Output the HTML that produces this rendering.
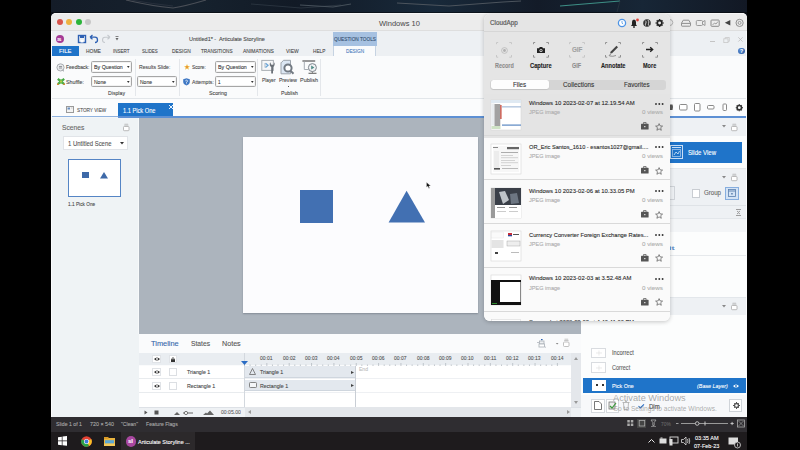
<!DOCTYPE html>
<html><head><meta charset="utf-8">
<style>
*{margin:0;padding:0;box-sizing:border-box}
html,body{width:800px;height:450px;overflow:hidden;background:#000;font-family:"Liberation Sans",sans-serif;}
.a{position:absolute}
.t{position:absolute;white-space:nowrap;line-height:1;-webkit-text-stroke:0.1px currentColor}
svg{overflow:visible}
</style></head><body>
<div class="a" style="left:51.00px;top:0.00px;width:696.00px;height:20.00px;background:linear-gradient(90deg,#141c28 0%,#16222e 20%,#121a26 35%,#18293a 55%,#131b28 70%,#172636 85%,#121824 100%)"></div>
<div class="a" style="left:51.00px;top:11.50px;width:696.00px;height:2.00px;background:rgba(0,0,0,0.45)"></div>
<svg class="a" style="left:51px;top:0px;" width="696" height="16" viewBox="0 0 696 16">
<path d="M75 0 Q100 6 122 8 Q135 6 155 0" stroke="#4a4f57" stroke-width="1.1" fill="none"/>
<path d="M80 0 Q102 4 122 6" stroke="#2c3440" stroke-width="0.8" fill="none"/>
<path d="M200 4 L250 8 L290 5" stroke="#2e3844" stroke-width="0.8" fill="none"/>
<path d="M249 5 L282 7 L300 4" stroke="#46505a" stroke-width="1" fill="none"/>
<path d="M346 3 L398 6 L452 2 L470 1" stroke="#4c545d" stroke-width="1" fill="none"/>
<path d="M509 6 L569 1" stroke="#3e8f86" stroke-width="1.1" fill="none"/>
<path d="M569 1 L566 12" stroke="#2a3540" stroke-width="0.8" fill="none"/>
</svg>
<div class="a" style="left:51.00px;top:13.00px;width:696.00px;height:404.00px;background:#f4f6f8;border-radius:5px 5px 0 0"></div>
<div class="a" style="left:51.00px;top:13.00px;width:696.00px;height:18.00px;background:#ececec;border-radius:5px 5px 0 0;border-bottom:1px solid #dedede;border-top:1px solid #f7f7f7"></div>
<div class="a" style="left:57.00px;top:19.00px;width:6.00px;height:6.00px;border-radius:50%;background:#d9544b"></div>
<div class="a" style="left:66.30px;top:19.00px;width:6.00px;height:6.00px;border-radius:50%;background:#eeb23f"></div>
<div class="a" style="left:76.00px;top:19.00px;width:6.00px;height:6.00px;border-radius:50%;background:#2bb43a"></div>
<div class="a" style="left:85.30px;top:19.00px;width:6.00px;height:6.00px;border-radius:50%;background:#c8c8c8"></div>
<div class="t" style="left:379.00px;top:20.00px;font-size:8.00px;color:#4e4e4e;--w:40.80px;transform:scaleX(0.9362);transform-origin:0 0;-webkit-text-stroke:0.05px #4e4e4e;">Windows 10</div>
<svg class="a" style="left:672px;top:16px;" width="75" height="13" viewBox="0 0 75 13">
<path d="M-2 3.5 Q0.5 3.5 0.8 6.5 Q0.5 9.5 -2 9.5" stroke="#b0b0b0" stroke-width="1" fill="none"/>
<path d="M9.5 7.2 L11.2 4.2 L16.8 4.2 L18.5 7.2 L18.5 9.6 Q18.5 10.2 17.9 10.2 L10.1 10.2 Q9.5 10.2 9.5 9.6Z" stroke="#8e8e8e" stroke-width="1" fill="none"/>
<line x1="9.5" y1="7.4" x2="18.5" y2="7.4" stroke="#8e8e8e" stroke-width="1"/>
<rect x="24.3" y="4.5" width="6.2" height="5" rx="1" stroke="#9a9a9a" stroke-width="1" fill="none"/>
<path d="M30.5 6 L33 4.5 L33 9.5 L30.5 8" stroke="#9a9a9a" stroke-width="1" fill="none"/>
<rect x="39" y="4" width="8.2" height="6.3" rx="0.8" stroke="#8a8a8a" stroke-width="1" fill="none"/>
<path d="M40.5 9 L42.5 7 L44 8 L46 5.5" stroke="#8a8a8a" stroke-width="0.8" fill="none"/>
<path d="M52.8 6.8 L58.3 4 L58.3 9.6Z" fill="#444"/>
<circle cx="67.6" cy="6.9" r="3.6" stroke="#8e8e8e" stroke-width="1" fill="none"/>
<circle cx="67.6" cy="6.9" r="1.5" stroke="#8e8e8e" stroke-width="0.9" fill="none"/>
</svg>
<div class="a" style="left:51.00px;top:31.00px;width:696.00px;height:25.00px;background:#edf0f3"></div>
<div class="a" style="left:55.50px;top:35.00px;width:8.00px;height:8.00px;border-radius:50%;background:#a53b96"></div>
<div class="t" style="left:57.30px;top:37.00px;font-size:5.00px;color:#fff;font-weight:bold;--w:4.50px;transform:scaleX(1.6180);transform-origin:0 0;">s</div>
<svg class="a" style="left:77px;top:34px;" width="50" height="10" viewBox="0 0 50 10">
<rect x="1.5" y="1.5" width="7" height="7" stroke="#2d60b3" stroke-width="1.4" fill="none"/>
<rect x="3" y="1.5" width="4" height="2.5" fill="#2d60b3"/>
<rect x="3.5" y="6" width="3" height="2.5" fill="#fff"/>
<path d="M13 3.2 L15.5 1 M13 3.2 L15.5 5.2 M13 3.2 L18 3.2 Q20.5 3.2 20.5 6 Q20.5 8.5 18 8.5" stroke="#2d60b3" stroke-width="1.3" fill="none"/>
<path d="M33 3.2 L30.5 1 M33 3.2 L30.5 5.2 M33 3.2 L28 3.2 Q25.5 3.2 25.5 6 Q25.5 8.5 28 8.5" stroke="#c5c9ce" stroke-width="1.1" fill="none"/>
<path d="M38.5 4 L41.5 4 L40 6.5Z" fill="#666"/>
<line x1="38.5" y1="2.5" x2="41.5" y2="2.5" stroke="#666" stroke-width="0.8"/>
</svg>
<div class="t" style="left:189.25px;top:36.00px;font-size:6.00px;color:#484848;--w:75.75px;transform:scaleX(0.9158);transform-origin:0 0;">Untitled1* -&nbsp; Articulate Storyline</div>
<div class="a" style="left:333.00px;top:32.00px;width:43.50px;height:14.00px;background:#a6c1e1"></div>
<div class="t" style="left:333.90px;top:37.00px;font-size:5.50px;color:#354f70;--w:42.00px;transform:scaleX(0.8624);transform-origin:0 0;">QUESTION TOOLS</div>
<div class="a" style="left:333.00px;top:46.00px;width:43.00px;height:11.00px;background:#fafbfc;border-left:1px solid #c6d3e2;border-right:1px solid #c6d3e2"></div>
<div class="t" style="left:345.50px;top:49.00px;font-size:5.50px;color:#4a7dbd;--w:18.25px;transform:scaleX(0.8652);transform-origin:0 0;">DESIGN</div>
<div class="a" style="left:51.00px;top:46.00px;width:28.00px;height:10.00px;background:#1f74c9"></div>
<div class="t" style="left:58.50px;top:48.00px;font-size:6.20px;color:#fff;--w:12.50px;transform:scaleX(0.9558);transform-origin:0 0;">FILE</div>
<div class="t" style="left:85.70px;top:49.00px;font-size:5.80px;color:#484848;--w:14.80px;transform:scaleX(0.8503);transform-origin:0 0;">HOME</div>
<div class="t" style="left:113.30px;top:49.00px;font-size:5.80px;color:#484848;--w:16.50px;transform:scaleX(0.7799);transform-origin:0 0;">INSERT</div>
<div class="t" style="left:142.20px;top:49.00px;font-size:5.80px;color:#484848;--w:15.80px;transform:scaleX(0.7661);transform-origin:0 0;">SLIDES</div>
<div class="t" style="left:171.50px;top:49.00px;font-size:5.80px;color:#484848;--w:18.70px;transform:scaleX(0.8410);transform-origin:0 0;">DESIGN</div>
<div class="t" style="left:201.10px;top:49.00px;font-size:5.80px;color:#484848;--w:31.60px;transform:scaleX(0.8106);transform-origin:0 0;">TRANSITIONS</div>
<div class="t" style="left:242.60px;top:49.00px;font-size:5.80px;color:#484848;--w:30.90px;transform:scaleX(0.8666);transform-origin:0 0;">ANIMATIONS</div>
<div class="t" style="left:286.00px;top:49.00px;font-size:5.80px;color:#484848;--w:12.70px;transform:scaleX(0.8565);transform-origin:0 0;">VIEW</div>
<div class="t" style="left:312.70px;top:49.00px;font-size:5.80px;color:#484848;--w:12.30px;transform:scaleX(0.8115);transform-origin:0 0;">HELP</div>
<div class="a" style="left:710.30px;top:40.80px;width:4.90px;height:0.80px;background:#c4c4c4"></div>
<svg class="a" style="left:723px;top:36.5px;" width="7" height="6" viewBox="0 0 7 6"><rect x="0.8" y="1.8" width="4.2" height="3.8" stroke="#c8c8c8" stroke-width="0.8" fill="none"/><path d="M2.2 1.8 L2.2 0.5 L6.3 0.5 L6.3 4.3 L5 4.3" stroke="#c8c8c8" stroke-width="0.8" fill="none"/></svg>
<svg class="a" style="left:737.5px;top:37.3px;" width="5" height="5" viewBox="0 0 5 5"><path d="M0.3 0.3 L4.6 4.6 M4.6 0.3 L0.3 4.6" stroke="#bdbdbd" stroke-width="0.8"/></svg>
<div class="a" style="left:738.00px;top:47.60px;width:6.60px;height:6.60px;border-radius:50%;background:radial-gradient(circle at 35% 35%,#5c8fd6,#25579f)"></div>
<div class="t" style="left:739.60px;top:49.00px;font-size:5.50px;color:#fff;font-weight:bold;--w:3.20px;transform:scaleX(0.9481);transform-origin:0 0;">?</div>
<div class="a" style="left:51.00px;top:56.00px;width:696.00px;height:43.00px;background:#fafbfc;border-bottom:1px solid #e2e6ea"></div>
<svg class="a" style="left:56px;top:62.5px;" width="9" height="9" viewBox="0 0 9 9"><circle cx="4.5" cy="4.4" r="3.6" stroke="#a3a7ab" stroke-width="0.9" fill="#e8eaec"/><path d="M3 3.5 L6 3.5 M3 5 L6 5" stroke="#7d8288" stroke-width="0.8"/><path d="M6.5 7 L8 8.3" stroke="#8a8f94" stroke-width="0.9"/></svg>
<div class="t" style="left:65.50px;top:64.00px;font-size:6.00px;color:#484848;--w:23.50px;transform:scaleX(0.8384);transform-origin:0 0;">Feedback:</div>
<div class="a" style="left:91.40px;top:61.40px;width:40.20px;height:11.20px;background:#fff;border:1px solid #a6a6a6;border-radius:1.5px;box-shadow:inset 0 0 0 0.5px #e6e6e6"></div>
<div class="t" style="left:93.60px;top:64.00px;font-size:6.00px;color:#333;--w:28.80px;transform:scaleX(0.8811);transform-origin:0 0;">By Question</div>
<svg class="a" style="left:126.8px;top:66.4px;" width="3" height="2" viewBox="0 0 3 2"><path d="M0 0 L2.6 0 L1.3 2Z" fill="#333"/></svg>
<svg class="a" style="left:56.5px;top:78px;" width="8" height="7" viewBox="0 0 8 7"><path d="M0.8 0.8 L7.2 6.2 M7.2 0.8 L0.8 6.2" stroke="#46a844" stroke-width="2.2"/><rect x="2.5" y="1.5" width="3" height="4" fill="#5cb84a"/><rect x="3.4" y="2.6" width="1.2" height="1.8" fill="#f2d23c"/><rect x="0" y="5.6" width="1.6" height="1.4" fill="#e5822e"/><rect x="6.4" y="5.6" width="1.6" height="1.4" fill="#e5822e"/></svg>
<div class="t" style="left:66.00px;top:79.00px;font-size:6.00px;color:#484848;--w:18.00px;transform:scaleX(0.8889);transform-origin:0 0;">Shuffle:</div>
<div class="a" style="left:91.40px;top:76.00px;width:40.20px;height:11.30px;background:#fff;border:1px solid #a6a6a6;border-radius:1.5px;box-shadow:inset 0 0 0 0.5px #e6e6e6"></div>
<div class="t" style="left:93.60px;top:79.00px;font-size:6.00px;color:#333;--w:12.00px;transform:scaleX(0.8366);transform-origin:0 0;">None</div>
<svg class="a" style="left:126.8px;top:81.05000000000001px;" width="3" height="2" viewBox="0 0 3 2"><path d="M0 0 L2.6 0 L1.3 2Z" fill="#333"/></svg>
<div class="t" style="left:108.00px;top:90.00px;font-size:6.00px;color:#484848;--w:17.00px;transform:scaleX(0.8635);transform-origin:0 0;">Display</div>
<div class="a" style="left:134.50px;top:59.00px;width:1.00px;height:37.00px;background:#e4e7eb"></div>
<div class="t" style="left:138.50px;top:64.00px;font-size:6.00px;color:#484848;--w:31.30px;transform:scaleX(0.8532);transform-origin:0 0;">Results Slide:</div>
<div class="a" style="left:137.30px;top:76.20px;width:39.50px;height:11.10px;background:#fff;border:1px solid #a6a6a6;border-radius:1.5px;box-shadow:inset 0 0 0 0.5px #e6e6e6"></div>
<div class="t" style="left:139.50px;top:79.00px;font-size:6.00px;color:#333;--w:12.00px;transform:scaleX(0.8366);transform-origin:0 0;">None</div>
<svg class="a" style="left:172.0px;top:81.15px;" width="3" height="2" viewBox="0 0 3 2"><path d="M0 0 L2.6 0 L1.3 2Z" fill="#333"/></svg>
<div class="a" style="left:178.50px;top:59.00px;width:1.00px;height:37.00px;background:#e4e7eb"></div>
<svg class="a" style="left:183.6px;top:64.3px;" width="6" height="6" viewBox="0 0 6 6"><path d="M3 0 L3.85 2.05 L6 2.15 L4.3 3.5 L4.9 5.8 L3 4.55 L1.1 5.8 L1.7 3.5 L0 2.15 L2.15 2.05Z" fill="#eebc3e"/><circle cx="3" cy="3" r="1" fill="#e88a3a"/></svg>
<div class="t" style="left:191.80px;top:64.00px;font-size:6.00px;color:#484848;--w:13.80px;transform:scaleX(0.7957);transform-origin:0 0;">Score:</div>
<div class="a" style="left:215.40px;top:61.30px;width:40.60px;height:11.30px;background:#fff;border:1px solid #a6a6a6;border-radius:1.5px;box-shadow:inset 0 0 0 0.5px #e6e6e6"></div>
<div class="t" style="left:217.60px;top:64.00px;font-size:6.00px;color:#333;--w:28.80px;transform:scaleX(0.8811);transform-origin:0 0;">By Question</div>
<svg class="a" style="left:251.2px;top:66.35px;" width="3" height="2" viewBox="0 0 3 2"><path d="M0 0 L2.6 0 L1.3 2Z" fill="#333"/></svg>
<svg class="a" style="left:183px;top:78px;" width="7" height="7.5" viewBox="0 0 7 7.5"><path d="M3.5 0.2 L6.8 1.3 L6.8 3.8 Q6.8 6.6 3.5 7.4 Q0.2 6.6 0.2 3.8 L0.2 1.3Z" fill="#3f78c4"/><path d="M2.4 2.8 Q3.5 1.6 4.6 2.8 Q4.6 3.6 3.5 4.2 L3.5 4.8" stroke="#fff" stroke-width="0.8" fill="none"/><circle cx="3.5" cy="5.7" r="0.45" fill="#fff"/></svg>
<div class="t" style="left:191.80px;top:79.00px;font-size:6.00px;color:#484848;--w:21.90px;transform:scaleX(0.8641);transform-origin:0 0;">Attempts:</div>
<div class="a" style="left:215.40px;top:75.90px;width:40.60px;height:11.40px;background:#fff;border:1px solid #a6a6a6;border-radius:1.5px;box-shadow:inset 0 0 0 0.5px #e6e6e6"></div>
<div class="t" style="left:217.60px;top:79.00px;font-size:6.00px;color:#333;--w:2.50px;transform:scaleX(0.7477);transform-origin:0 0;">1</div>
<svg class="a" style="left:251.2px;top:81.0px;" width="3" height="2" viewBox="0 0 3 2"><path d="M0 0 L2.6 0 L1.3 2Z" fill="#333"/></svg>
<div class="t" style="left:209.30px;top:90.00px;font-size:6.00px;color:#484848;--w:17.90px;transform:scaleX(0.8799);transform-origin:0 0;">Scoring</div>
<div class="a" style="left:257.00px;top:59.00px;width:1.00px;height:37.00px;background:#e4e7eb"></div>
<svg class="a" style="left:258px;top:57px;" width="64" height="20" viewBox="0 0 64 20">
<rect x="3.8" y="3.4" width="11.6" height="10" stroke="#a9aeb4" stroke-width="1" fill="#f6f7f8"/>
<path d="M7.5 6.2 L10 8.3 L7.5 10.4" stroke="#6aa6d8" stroke-width="1.3" fill="none"/>
<line x1="7" y1="6" x2="7" y2="10.6" stroke="#9ab" stroke-width="0.8"/>
<path d="M12.2 5.2 Q10.8 8.5 13.2 10 L13.2 16.5 L15 16.5 L15 10 Q17.4 8.5 16.4 5.2 L15.5 7.8 L13.4 7.8Z" fill="#6b7178"/>
<path d="M23.5 5.5 L25.5 3.3 L32.5 3.3 L32.5 16.8 L23 16.8 L23 5.5Z" stroke="#9ca3ab" stroke-width="1" fill="#dce7f3"/>
<circle cx="30" cy="11" r="3.6" stroke="#727a83" stroke-width="2" fill="#fff"/>
<path d="M32.4 13.6 L35.5 16.8" stroke="#727a83" stroke-width="2"/>
<line x1="44.4" y1="4" x2="57.2" y2="4" stroke="#555" stroke-width="1.2"/>
<path d="M46.3 4.6 L46.3 12.5 L50.5 12.5" stroke="#a7adb3" stroke-width="1" fill="none"/>
<circle cx="54.4" cy="10.6" r="4" stroke="#7e858d" stroke-width="1" fill="#f0f2f4"/>
<path d="M53.2 8.6 L56.4 10.6 L53.2 12.6Z" fill="#4f8a85"/>
<line x1="50.5" y1="16.3" x2="58.5" y2="16.3" stroke="#666" stroke-width="1.1"/>
<line x1="54.4" y1="14.6" x2="54.4" y2="16.3" stroke="#777" stroke-width="0.9"/>
</svg>
<div class="t" style="left:262.00px;top:77.00px;font-size:6.00px;color:#484848;--w:13.50px;transform:scaleX(0.7934);transform-origin:0 0;">Player</div>
<div class="t" style="left:279.00px;top:77.00px;font-size:6.00px;color:#484848;--w:18.00px;transform:scaleX(0.8433);transform-origin:0 0;">Preview</div>
<div class="t" style="left:300.00px;top:77.00px;font-size:6.00px;color:#484848;--w:18.00px;transform:scaleX(0.9143);transform-origin:0 0;">Publish</div>
<div class="a" style="left:287.50px;top:85.80px;width:1.50px;height:1.00px;background:#555"></div>
<div class="t" style="left:281.00px;top:90.00px;font-size:6.00px;color:#484848;--w:17.00px;transform:scaleX(0.8635);transform-origin:0 0;">Publish</div>
<div class="a" style="left:320.00px;top:59.00px;width:1.00px;height:37.00px;background:#e4e7eb"></div>
<div class="a" style="left:51.00px;top:99.00px;width:696.00px;height:18.00px;background:#fbfcfd"></div>
<svg class="a" style="left:66px;top:106px;" width="8" height="7" viewBox="0 0 8 7"><rect x="0.5" y="0.5" width="7" height="6" stroke="#9a9a9a" fill="#f4f4f4"/><rect x="1.5" y="1.5" width="2.5" height="2" fill="#6a8fc0"/><line x1="5" y1="2" x2="6.5" y2="2" stroke="#aaa" stroke-width="0.6"/></svg>
<div class="t" style="left:76.50px;top:108.00px;font-size:5.30px;color:#555;--w:29.20px;transform:scaleX(0.8857);transform-origin:0 0;">STORY VIEW</div>
<div class="a" style="left:118.20px;top:103.30px;width:55.30px;height:13.70px;background:#1f74c9"></div>
<div class="t" style="left:123.00px;top:108.00px;font-size:6.60px;color:#fff;--w:32.50px;transform:scaleX(0.8609);transform-origin:0 0;">1.1 Pick One</div>
<svg class="a" style="left:168.5px;top:104.5px;" width="4" height="4" viewBox="0 0 4 4"><path d="M0 0 L4 4 M4 0 L0 4" stroke="#fff" stroke-width="0.9"/></svg>
<div class="a" style="left:51.00px;top:116.20px;width:67.20px;height:1.30px;background:#8fb2df"></div>
<div class="a" style="left:118.20px;top:116.20px;width:628.80px;height:1.40px;background:#5d90d4"></div>
<svg class="a" style="left:670px;top:102px;" width="77" height="10" viewBox="0 0 77 10">
<path d="M0 2.5 L2.5 2.5 L3 5 L2.5 8 L0 8" fill="#555"/><rect x="9.5" y="2.5" width="7.5" height="5.5" rx="1" stroke="#8a8a8a" stroke-width="1" fill="#fff"/>
<rect x="24.5" y="1.5" width="5.5" height="7.5" rx="1" stroke="#8a8a8a" stroke-width="1" fill="#fff"/>
<rect x="37.5" y="3.5" width="6.5" height="3.5" rx="1" stroke="#8a8a8a" stroke-width="1" fill="#fff"/>
<rect x="53" y="2" width="3.5" height="6.5" rx="0.8" stroke="#8a8a8a" stroke-width="1" fill="#fff"/>
<circle cx="69.3" cy="5.7" r="2.2" stroke="#333" stroke-width="1.6" fill="none"/>
<path d="M69.3 2.2 L69.3 3 M69.3 8.4 L69.3 9.2 M65.8 5.7 L66.6 5.7 M72 5.7 L72.8 5.7 M66.8 3.2 L67.3 3.7 M71.3 7.7 L71.8 8.2 M71.8 3.2 L71.3 3.7 M67.3 7.7 L66.8 8.2" stroke="#333" stroke-width="1.3"/>
</svg>
<div class="a" style="left:51.00px;top:117.50px;width:88.00px;height:299.50px;background:#eff3f5"></div>
<div class="a" style="left:137.80px;top:117.50px;width:1.20px;height:216.00px;background:#f7f9fa"></div>
<div class="t" style="left:62.20px;top:124.00px;font-size:7.50px;color:#666;--w:22.40px;transform:scaleX(0.8949);transform-origin:0 0;">Scenes</div>
<svg class="a" style="left:122.5px;top:123.5px;" width="7" height="6" viewBox="0 0 7 6"><rect x="0.5" y="2.5" width="5.5" height="4.2" rx="0.8" stroke="#aaa" stroke-width="0.8" fill="#fff"/><path d="M1.2 1.2 L5.4 1.2 M1.5 0.2 L5.1 0.2" stroke="#aaa" stroke-width="0.6"/></svg>
<div class="a" style="left:62.80px;top:136.00px;width:65.40px;height:13.70px;background:#fff;border:1px solid #e1e4e8"></div>
<div class="t" style="left:68.30px;top:141.00px;font-size:6.60px;color:#555;--w:43.50px;transform:scaleX(0.8989);transform-origin:0 0;">1 Untitled Scene</div>
<svg class="a" style="left:119.5px;top:142px;" width="4" height="3" viewBox="0 0 4 3"><path d="M0 0 L4 0 L2 2.6Z" fill="#333"/></svg>
<div class="a" style="left:68.30px;top:158.50px;width:52.70px;height:38.80px;background:#fff;border:1px solid #5585c5"></div>
<div class="a" style="left:82.00px;top:171.50px;width:7.10px;height:6.80px;background:#3d69a8"></div>
<svg class="a" style="left:100.4px;top:171.5px;" width="8" height="6.5" viewBox="0 0 8 6.5"><path d="M4 0 L8 6.5 L0 6.5Z" fill="#3d69a8"/></svg>
<div class="t" style="left:68.30px;top:202.00px;font-size:5.40px;color:#4a4a4a;--w:27.20px;transform:scaleX(0.8810);transform-origin:0 0;">1.1 Pick One</div>
<div class="a" style="left:139.00px;top:117.50px;width:442.00px;height:216.00px;background:#acb4bd"></div>
<div class="a" style="left:243.00px;top:137.00px;width:234.50px;height:176.00px;background:#fcfcfe;box-shadow:0 1px 1.5px rgba(60,70,80,0.35)"></div>
<div class="a" style="left:300.00px;top:190.00px;width:32.50px;height:33.00px;background:#4270b2"></div>
<svg class="a" style="left:388px;top:190px;" width="38" height="33" viewBox="0 0 38 33"><path d="M18.6 0.8 L37 32.5 L0.6 32.5Z" fill="#4270b2"/></svg>
<svg class="a" style="left:425.5px;top:181.8px;" width="6" height="7" viewBox="0 0 6 7"><path d="M0.5 0.3 L0.5 5.3 L1.8 4.3 L2.9 6.4 L3.7 6 L2.8 4 L4.7 4Z" fill="#111" stroke="#fff" stroke-width="0.3"/></svg>
<div class="a" style="left:139.00px;top:333.50px;width:442.00px;height:83.50px;background:#fafbfc"></div>
<div class="t" style="left:151.40px;top:340.00px;font-size:7.50px;color:#3466ab;--w:27.70px;transform:scaleX(0.9865);transform-origin:0 0;">Timeline</div>
<div class="t" style="left:190.60px;top:340.00px;font-size:7.50px;color:#555;--w:19.10px;transform:scaleX(0.8982);transform-origin:0 0;">States</div>
<div class="t" style="left:221.50px;top:340.00px;font-size:7.50px;color:#555;--w:18.70px;transform:scaleX(0.9544);transform-origin:0 0;">Notes</div>
<svg class="a" style="left:536px;top:338px;" width="36" height="11" viewBox="0 0 36 11">
<rect x="5" y="1" width="1.6" height="1.2" fill="#2a5fae"/>
<rect x="3.5" y="3" width="4.5" height="3" stroke="#a9afb6" stroke-width="0.8" fill="#eef0f2"/>
<rect x="3" y="6" width="5.5" height="3" stroke="#a9afb6" stroke-width="0.8" fill="#fff"/>
<path d="M1 4.5 L3 4.5 M8.5 8.5 L10 9.5" stroke="#b0b5bb" stroke-width="0.8"/>
<path d="M19.8 5 L22.5 5 L21.15 6.6Z" fill="#888"/>
<rect x="27.5" y="4" width="5.5" height="4.5" rx="1" stroke="#b0b0b0" stroke-width="0.8" fill="#fff"/>
<path d="M28.2 2.5 L32.5 2.5 M28.5 1.2 L32.2 1.2" stroke="#b0b0b0" stroke-width="0.7"/>
</svg>
<div class="a" style="left:139.00px;top:352.60px;width:432.00px;height:12.90px;background:#e9edf1"></div>
<div class="a" style="left:152.00px;top:355.00px;width:8.50px;height:8.00px;background:#fff;border:1px solid #e0e3e7"></div>
<svg class="a" style="left:153.5px;top:357px;" width="6" height="4" viewBox="0 0 6 4"><path d="M0 2 Q3 -1 6 2 Q3 5 0 2Z" fill="#333"/><circle cx="3" cy="2" r="0.9" fill="#fff"/></svg>
<div class="a" style="left:168.60px;top:355.00px;width:8.00px;height:8.00px;background:#fff;border:1px solid #e0e3e7"></div>
<svg class="a" style="left:170.5px;top:356.5px;" width="4" height="5" viewBox="0 0 4 5"><path d="M0.9 2.2 L0.9 1.5 Q2 -0.3 3.1 1.5 L3.1 2.2" stroke="#333" stroke-width="0.8" fill="none"/><rect x="0" y="2.2" width="4" height="2.8" fill="#333"/></svg>
<div class="a" style="left:139.00px;top:365.50px;width:105.00px;height:42.00px;background:#fff"></div>
<div class="a" style="left:139.00px;top:378.40px;width:105.00px;height:0.80px;background:#e8ebee"></div>
<div class="a" style="left:139.00px;top:391.80px;width:105.00px;height:0.80px;background:#e8ebee"></div>
<div class="a" style="left:152.00px;top:368.30px;width:8.50px;height:8.00px;background:#fff;border:1px solid #e0e3e7"></div>
<svg class="a" style="left:153.5px;top:370.3px;" width="6" height="4" viewBox="0 0 6 4"><path d="M0 2 Q3 -1 6 2 Q3 5 0 2Z" fill="#333"/><circle cx="3" cy="2" r="0.9" fill="#fff"/></svg>
<div class="a" style="left:168.60px;top:368.30px;width:8.00px;height:8.00px;background:#fff;border:1px solid #dcdfe3"></div>
<div class="t" style="left:186.70px;top:369.00px;font-size:6.00px;color:#484848;--w:23.30px;transform:scaleX(0.8803);transform-origin:0 0;">Triangle 1</div>
<div class="a" style="left:152.00px;top:381.70px;width:8.50px;height:8.00px;background:#fff;border:1px solid #e0e3e7"></div>
<svg class="a" style="left:153.5px;top:383.7px;" width="6" height="4" viewBox="0 0 6 4"><path d="M0 2 Q3 -1 6 2 Q3 5 0 2Z" fill="#333"/><circle cx="3" cy="2" r="0.9" fill="#fff"/></svg>
<div class="a" style="left:168.60px;top:381.70px;width:8.00px;height:8.00px;background:#fff;border:1px solid #dcdfe3"></div>
<div class="t" style="left:186.70px;top:383.00px;font-size:6.00px;color:#484848;--w:28.30px;transform:scaleX(0.8835);transform-origin:0 0;">Rectangle 1</div>
<div class="a" style="left:243.50px;top:352.60px;width:1.00px;height:54.90px;background:#d3d8de"></div>
<div class="t" style="left:260.15px;top:356.00px;font-size:5.60px;color:#555;--w:12.40px;transform:scaleX(0.8857);transform-origin:0 0;">00:01</div>
<div class="t" style="left:282.50px;top:356.00px;font-size:5.60px;color:#555;--w:12.40px;transform:scaleX(0.8857);transform-origin:0 0;">00:02</div>
<div class="t" style="left:304.85px;top:356.00px;font-size:5.60px;color:#555;--w:12.40px;transform:scaleX(0.8857);transform-origin:0 0;">00:03</div>
<div class="t" style="left:327.20px;top:356.00px;font-size:5.60px;color:#555;--w:12.40px;transform:scaleX(0.8857);transform-origin:0 0;">00:04</div>
<div class="t" style="left:349.55px;top:356.00px;font-size:5.60px;color:#555;--w:12.40px;transform:scaleX(0.8857);transform-origin:0 0;">00:05</div>
<div class="t" style="left:371.90px;top:356.00px;font-size:5.60px;color:#555;--w:12.40px;transform:scaleX(0.8857);transform-origin:0 0;">00:06</div>
<div class="t" style="left:394.25px;top:356.00px;font-size:5.60px;color:#555;--w:12.40px;transform:scaleX(0.8857);transform-origin:0 0;">00:07</div>
<div class="t" style="left:416.60px;top:356.00px;font-size:5.60px;color:#555;--w:12.40px;transform:scaleX(0.8857);transform-origin:0 0;">00:08</div>
<div class="t" style="left:438.95px;top:356.00px;font-size:5.60px;color:#555;--w:12.40px;transform:scaleX(0.8857);transform-origin:0 0;">00:09</div>
<div class="t" style="left:461.30px;top:356.00px;font-size:5.60px;color:#555;--w:12.40px;transform:scaleX(0.8857);transform-origin:0 0;">00:10</div>
<div class="t" style="left:483.65px;top:356.00px;font-size:5.60px;color:#555;--w:12.40px;transform:scaleX(0.9122);transform-origin:0 0;">00:11</div>
<div class="t" style="left:506.00px;top:356.00px;font-size:5.60px;color:#555;--w:12.40px;transform:scaleX(0.8857);transform-origin:0 0;">00:12</div>
<div class="t" style="left:528.35px;top:356.00px;font-size:5.60px;color:#555;--w:12.40px;transform:scaleX(0.8857);transform-origin:0 0;">00:13</div>
<div class="t" style="left:550.70px;top:356.00px;font-size:5.60px;color:#555;--w:12.40px;transform:scaleX(0.8857);transform-origin:0 0;">00:14</div>
<svg class="a" style="left:244px;top:362.5px;" width="327" height="3" viewBox="0 0 327 3"><line x1="0.50" y1="0.00" x2="0.50" y2="3" stroke="#b5bbc2" stroke-width="0.8"/><line x1="6.09" y1="1.50" x2="6.09" y2="3" stroke="#b5bbc2" stroke-width="0.8"/><line x1="11.68" y1="1.50" x2="11.68" y2="3" stroke="#b5bbc2" stroke-width="0.8"/><line x1="17.26" y1="1.50" x2="17.26" y2="3" stroke="#b5bbc2" stroke-width="0.8"/><line x1="22.85" y1="0.00" x2="22.85" y2="3" stroke="#b5bbc2" stroke-width="0.8"/><line x1="28.44" y1="1.50" x2="28.44" y2="3" stroke="#b5bbc2" stroke-width="0.8"/><line x1="34.03" y1="1.50" x2="34.03" y2="3" stroke="#b5bbc2" stroke-width="0.8"/><line x1="39.61" y1="1.50" x2="39.61" y2="3" stroke="#b5bbc2" stroke-width="0.8"/><line x1="45.20" y1="0.00" x2="45.20" y2="3" stroke="#b5bbc2" stroke-width="0.8"/><line x1="50.79" y1="1.50" x2="50.79" y2="3" stroke="#b5bbc2" stroke-width="0.8"/><line x1="56.38" y1="1.50" x2="56.38" y2="3" stroke="#b5bbc2" stroke-width="0.8"/><line x1="61.96" y1="1.50" x2="61.96" y2="3" stroke="#b5bbc2" stroke-width="0.8"/><line x1="67.55" y1="0.00" x2="67.55" y2="3" stroke="#b5bbc2" stroke-width="0.8"/><line x1="73.14" y1="1.50" x2="73.14" y2="3" stroke="#b5bbc2" stroke-width="0.8"/><line x1="78.73" y1="1.50" x2="78.73" y2="3" stroke="#b5bbc2" stroke-width="0.8"/><line x1="84.31" y1="1.50" x2="84.31" y2="3" stroke="#b5bbc2" stroke-width="0.8"/><line x1="89.90" y1="0.00" x2="89.90" y2="3" stroke="#b5bbc2" stroke-width="0.8"/><line x1="95.49" y1="1.50" x2="95.49" y2="3" stroke="#b5bbc2" stroke-width="0.8"/><line x1="101.08" y1="1.50" x2="101.08" y2="3" stroke="#b5bbc2" stroke-width="0.8"/><line x1="106.66" y1="1.50" x2="106.66" y2="3" stroke="#b5bbc2" stroke-width="0.8"/><line x1="112.25" y1="0.00" x2="112.25" y2="3" stroke="#b5bbc2" stroke-width="0.8"/><line x1="117.84" y1="1.50" x2="117.84" y2="3" stroke="#b5bbc2" stroke-width="0.8"/><line x1="123.43" y1="1.50" x2="123.43" y2="3" stroke="#b5bbc2" stroke-width="0.8"/><line x1="129.01" y1="1.50" x2="129.01" y2="3" stroke="#b5bbc2" stroke-width="0.8"/><line x1="134.60" y1="0.00" x2="134.60" y2="3" stroke="#b5bbc2" stroke-width="0.8"/><line x1="140.19" y1="1.50" x2="140.19" y2="3" stroke="#b5bbc2" stroke-width="0.8"/><line x1="145.78" y1="1.50" x2="145.78" y2="3" stroke="#b5bbc2" stroke-width="0.8"/><line x1="151.36" y1="1.50" x2="151.36" y2="3" stroke="#b5bbc2" stroke-width="0.8"/><line x1="156.95" y1="0.00" x2="156.95" y2="3" stroke="#b5bbc2" stroke-width="0.8"/><line x1="162.54" y1="1.50" x2="162.54" y2="3" stroke="#b5bbc2" stroke-width="0.8"/><line x1="168.12" y1="1.50" x2="168.12" y2="3" stroke="#b5bbc2" stroke-width="0.8"/><line x1="173.71" y1="1.50" x2="173.71" y2="3" stroke="#b5bbc2" stroke-width="0.8"/><line x1="179.30" y1="0.00" x2="179.30" y2="3" stroke="#b5bbc2" stroke-width="0.8"/><line x1="184.89" y1="1.50" x2="184.89" y2="3" stroke="#b5bbc2" stroke-width="0.8"/><line x1="190.48" y1="1.50" x2="190.48" y2="3" stroke="#b5bbc2" stroke-width="0.8"/><line x1="196.06" y1="1.50" x2="196.06" y2="3" stroke="#b5bbc2" stroke-width="0.8"/><line x1="201.65" y1="0.00" x2="201.65" y2="3" stroke="#b5bbc2" stroke-width="0.8"/><line x1="207.24" y1="1.50" x2="207.24" y2="3" stroke="#b5bbc2" stroke-width="0.8"/><line x1="212.83" y1="1.50" x2="212.83" y2="3" stroke="#b5bbc2" stroke-width="0.8"/><line x1="218.41" y1="1.50" x2="218.41" y2="3" stroke="#b5bbc2" stroke-width="0.8"/><line x1="224.00" y1="0.00" x2="224.00" y2="3" stroke="#b5bbc2" stroke-width="0.8"/><line x1="229.59" y1="1.50" x2="229.59" y2="3" stroke="#b5bbc2" stroke-width="0.8"/><line x1="235.18" y1="1.50" x2="235.18" y2="3" stroke="#b5bbc2" stroke-width="0.8"/><line x1="240.76" y1="1.50" x2="240.76" y2="3" stroke="#b5bbc2" stroke-width="0.8"/><line x1="246.35" y1="0.00" x2="246.35" y2="3" stroke="#b5bbc2" stroke-width="0.8"/><line x1="251.94" y1="1.50" x2="251.94" y2="3" stroke="#b5bbc2" stroke-width="0.8"/><line x1="257.53" y1="1.50" x2="257.53" y2="3" stroke="#b5bbc2" stroke-width="0.8"/><line x1="263.11" y1="1.50" x2="263.11" y2="3" stroke="#b5bbc2" stroke-width="0.8"/><line x1="268.70" y1="0.00" x2="268.70" y2="3" stroke="#b5bbc2" stroke-width="0.8"/><line x1="274.29" y1="1.50" x2="274.29" y2="3" stroke="#b5bbc2" stroke-width="0.8"/><line x1="279.88" y1="1.50" x2="279.88" y2="3" stroke="#b5bbc2" stroke-width="0.8"/><line x1="285.46" y1="1.50" x2="285.46" y2="3" stroke="#b5bbc2" stroke-width="0.8"/><line x1="291.05" y1="0.00" x2="291.05" y2="3" stroke="#b5bbc2" stroke-width="0.8"/><line x1="296.64" y1="1.50" x2="296.64" y2="3" stroke="#b5bbc2" stroke-width="0.8"/><line x1="302.23" y1="1.50" x2="302.23" y2="3" stroke="#b5bbc2" stroke-width="0.8"/><line x1="307.81" y1="1.50" x2="307.81" y2="3" stroke="#b5bbc2" stroke-width="0.8"/><line x1="313.40" y1="0.00" x2="313.40" y2="3" stroke="#b5bbc2" stroke-width="0.8"/></svg>
<svg class="a" style="left:241.3px;top:361px;" width="7" height="4" viewBox="0 0 7 4"><path d="M0 0 L7 0 L3.5 4Z" fill="#2a6cc4"/></svg>
<div class="a" style="left:244.50px;top:365.50px;width:326.50px;height:41.80px;background:#fff"></div>
<div class="a" style="left:244.50px;top:378.40px;width:326.50px;height:0.60px;background:#eef0f3"></div>
<div class="a" style="left:244.50px;top:391.80px;width:326.50px;height:0.60px;background:#eef0f3"></div>
<div class="a" style="left:244.90px;top:366.20px;width:110.50px;height:11.40px;background:#e3e8ee;border-bottom:1px solid #cfd6de"></div>
<div class="a" style="left:244.90px;top:379.70px;width:110.50px;height:10.90px;background:#e3e8ee;border-bottom:1px solid #cfd6de"></div>
<svg class="a" style="left:249px;top:368px;" width="7" height="7" viewBox="0 0 7 7"><path d="M3.5 0.5 L6.5 6.5 L0.5 6.5Z" stroke="#777" stroke-width="0.9" fill="none"/></svg>
<div class="t" style="left:260.30px;top:369.00px;font-size:6.00px;color:#484848;--w:23.20px;transform:scaleX(0.8765);transform-origin:0 0;">Triangle 1</div>
<svg class="a" style="left:249px;top:382px;" width="8" height="6" viewBox="0 0 8 6"><rect x="0.5" y="0.5" width="7" height="5" rx="0.8" stroke="#777" stroke-width="0.9" fill="#f4f6f8"/></svg>
<div class="t" style="left:260.30px;top:383.00px;font-size:6.00px;color:#484848;--w:28.10px;transform:scaleX(0.8773);transform-origin:0 0;">Rectangle 1</div>
<svg class="a" style="left:350.8px;top:370.5px;" width="3" height="3" viewBox="0 0 3 3"><path d="M0 0 L3 1.5 L0 3Z" fill="#444"/></svg>
<svg class="a" style="left:350.8px;top:384px;" width="3" height="3" viewBox="0 0 3 3"><path d="M0 0 L3 1.5 L0 3Z" fill="#444"/></svg>
<div class="a" style="left:355.20px;top:366.00px;width:1.00px;height:41.30px;background:#c9ced5"></div>
<div class="t" style="left:359.40px;top:367.00px;font-size:5.60px;color:#c0c0c0;--w:9.00px;transform:scaleX(0.9042);transform-origin:0 0;">End</div>
<div class="a" style="left:571.00px;top:352.60px;width:10.00px;height:54.70px;background:#e4e7eb"></div>
<svg class="a" style="left:574px;top:356.5px;" width="4" height="3" viewBox="0 0 4 3"><path d="M0 3 L4 3 L2 0Z" fill="#999"/></svg>
<svg class="a" style="left:574px;top:401px;" width="4" height="3" viewBox="0 0 4 3"><path d="M0 0 L4 0 L2 3Z" fill="#999"/></svg>
<div class="a" style="left:139.00px;top:407.30px;width:442.00px;height:9.70px;background:#eef1f4;border-top:1px solid #dde1e6"></div>
<div class="a" style="left:244.50px;top:407.30px;width:326.50px;height:9.70px;background:#e3e6ea"></div>
<svg class="a" style="left:247.5px;top:410px;" width="3" height="4" viewBox="0 0 3 4"><path d="M3 0 L0 2 L3 4Z" fill="#999"/></svg>
<svg class="a" style="left:567px;top:410px;" width="3" height="4" viewBox="0 0 3 4"><path d="M0 0 L3 2 L0 4Z" fill="#999"/></svg>
<svg class="a" style="left:144px;top:409.5px;" width="100" height="6" viewBox="0 0 100 6">
<path d="M0.5 0.5 L3.5 2.5 L0.5 4.5Z" fill="#555"/>
<rect x="10.5" y="0.5" width="4" height="4" fill="#555"/>
<path d="M30 5 L33 2 L36 5Z" fill="#666"/>
<circle cx="42" cy="3" r="1.6" stroke="#666" stroke-width="0.9" fill="#fff"/>
<line x1="39" y1="3" x2="40.4" y2="3" stroke="#666"/><line x1="43.6" y1="3" x2="49" y2="3" stroke="#666"/>
<path d="M59 5 L62 2.5 L63 3.5 L66 0.5 L70 5Z" fill="#666"/>
</svg>
<div class="t" style="left:221.00px;top:410.00px;font-size:5.60px;color:#666;--w:19.80px;transform:scaleX(0.9090);transform-origin:0 0;">00:05.00</div>
<div class="a" style="left:581.00px;top:117.50px;width:166.00px;height:299.50px;background:#fcfdfd"></div>
<div class="a" style="left:581.00px;top:117.50px;width:166.00px;height:18.50px;background:#eef1f4"></div>
<svg class="a" style="left:722px;top:125px;" width="4" height="3" viewBox="0 0 4 3"><path d="M0 0 L4 0 L2 2.6Z" fill="#888"/></svg>
<svg class="a" style="left:731px;top:123.5px;" width="7" height="7" viewBox="0 0 7 7"><rect x="0.5" y="2.5" width="5.5" height="4.2" rx="0.8" stroke="#aaa" stroke-width="0.8" fill="#fff"/><path d="M1.2 1.2 L5.4 1.2 M1.5 0.2 L5.1 0.2" stroke="#aaa" stroke-width="0.6"/></svg>
<div class="a" style="left:581.00px;top:141.60px;width:160.50px;height:21.00px;background:#1f74c9"></div>
<svg class="a" style="left:670px;top:145px;" width="13" height="14" viewBox="0 0 13 14"><rect x="0.5" y="0.5" width="12" height="13" stroke="#c9def5" stroke-width="1" fill="none"/><rect x="2" y="2" width="9" height="1" fill="#c9def5"/><rect x="2.5" y="4.5" width="8" height="7" stroke="#9fc2ea" stroke-width="0.8" fill="none"/><path d="M4 10 L6 7 L8 9 L9.5 6" stroke="#d8e8f8" stroke-width="0.8" fill="none"/></svg>
<div class="t" style="left:688.00px;top:150.00px;font-size:6.70px;color:#fff;--w:28.00px;transform:scaleX(0.9001);transform-origin:0 0;">Slide View</div>
<div class="a" style="left:581.00px;top:168.00px;width:166.00px;height:37.50px;background:#eef1f4;border-top:1px solid #e3e7eb;border-bottom:1px solid #dfe3e7"></div>
<svg class="a" style="left:722px;top:176px;" width="4" height="3" viewBox="0 0 4 3"><path d="M0 0 L4 0 L2 2.6Z" fill="#888"/></svg>
<svg class="a" style="left:731px;top:174px;" width="7" height="7" viewBox="0 0 7 7"><rect x="0.5" y="2.5" width="5.5" height="4.2" rx="0.8" stroke="#aaa" stroke-width="0.8" fill="#fff"/><path d="M1.2 1.2 L5.4 1.2 M1.5 0.2 L5.1 0.2" stroke="#aaa" stroke-width="0.6"/></svg>
<div class="a" style="left:670.00px;top:186.00px;width:4.50px;height:14.00px;border:1px solid #cfd3d8;border-left:none"></div>
<div class="a" style="left:692.00px;top:188.50px;width:8.00px;height:9.00px;background:#fff;border:1px solid #c9cdd2"></div>
<div class="t" style="left:704.00px;top:190.00px;font-size:6.80px;color:#666;--w:17.00px;transform:scaleX(0.8999);transform-origin:0 0;">Group</div>
<div class="a" style="left:725.40px;top:186.60px;width:13.20px;height:13.20px;background:#d3e3f5;border:1px solid #86aedf"></div>
<svg class="a" style="left:728px;top:189px;" width="8" height="8" viewBox="0 0 8 8"><rect x="0.5" y="0.5" width="7" height="7" stroke="#5a7fae" stroke-width="0.8" fill="none"/><line x1="0.5" y1="2" x2="7.5" y2="2" stroke="#5a7fae" stroke-width="0.9"/><rect x="3.2" y="4" width="1.5" height="1.5" fill="#5a7fae"/></svg>
<div class="a" style="left:581.00px;top:205.50px;width:166.00px;height:13.20px;background:#eef1f4;border-bottom:1px solid #e3e7eb"></div>
<svg class="a" style="left:735.5px;top:209px;" width="5" height="7" viewBox="0 0 5 7"><path d="M0 0.5 L5 0.5 M0 6.5 L5 6.5 M1 2 L2.5 3.2 L4 2 M1 5 L2.5 3.8 L4 5" stroke="#888" stroke-width="0.8" fill="none"/></svg>
<div class="a" style="left:581.00px;top:218.70px;width:166.00px;height:13.00px;background:#f3f5f7"></div>
<div class="a" style="left:581.00px;top:254.50px;width:166.00px;height:0.80px;background:#e6e9ec"></div>
<div class="t" style="left:669.30px;top:245.00px;font-size:6.20px;color:#4a7fc2;--w:5.50px;transform:scaleX(1.7778);transform-origin:0 0;">it</div>
<div class="a" style="left:581.00px;top:296.60px;width:166.00px;height:18.80px;background:#eef1f4;border-top:1px solid #e3e7eb"></div>
<svg class="a" style="left:722px;top:305px;" width="4" height="3" viewBox="0 0 4 3"><path d="M0 0 L4 0 L2 2.6Z" fill="#888"/></svg>
<svg class="a" style="left:731px;top:303px;" width="7" height="7" viewBox="0 0 7 7"><rect x="0.5" y="2.5" width="5.5" height="4.2" rx="0.8" stroke="#aaa" stroke-width="0.8" fill="#fff"/><path d="M1.2 1.2 L5.4 1.2 M1.5 0.2 L5.1 0.2" stroke="#aaa" stroke-width="0.6"/></svg>
<div class="a" style="left:583.30px;top:340.00px;width:162.30px;height:55.00px;background:#fcfdfd"></div>
<div class="a" style="left:591.10px;top:347.80px;width:15.10px;height:10.40px;background:#fff;border:1px solid #d9dce0"></div>
<svg class="a" style="left:594.5px;top:350.0px;" width="8" height="6" viewBox="0 0 8 6"><path d="M4 0.5 L4 5.5 M1 3 L7 3" stroke="#dcdcdc" stroke-width="0.6"/></svg>
<div class="t" style="left:612.20px;top:350.00px;font-size:6.30px;color:#5e5e5e;--w:21.80px;transform:scaleX(0.8898);transform-origin:0 0;">Incorrect</div>
<div class="a" style="left:591.10px;top:362.20px;width:15.10px;height:10.70px;background:#fff;border:1px solid #d9dce0"></div>
<svg class="a" style="left:594.5px;top:364.54999999999995px;" width="8" height="6" viewBox="0 0 8 6"><path d="M4 0.5 L4 5.5 M1 3 L7 3" stroke="#dcdcdc" stroke-width="0.6"/></svg>
<div class="t" style="left:612.20px;top:365.00px;font-size:6.30px;color:#5e5e5e;--w:18.20px;transform:scaleX(0.8811);transform-origin:0 0;">Correct</div>
<div class="a" style="left:583.30px;top:377.60px;width:162.30px;height:15.30px;background:#1f74c9"></div>
<div class="a" style="left:591.60px;top:380.00px;width:14.40px;height:10.70px;background:#fff"></div>
<div class="a" style="left:596.00px;top:384.00px;width:2.00px;height:2.00px;background:#333"></div>
<div class="a" style="left:601.50px;top:384.00px;width:2.00px;height:2.00px;background:#333"></div>
<div class="t" style="left:612.20px;top:383.00px;font-size:6.00px;color:#fff;--w:21.80px;transform:scaleX(0.8955);transform-origin:0 0;">Pick One</div>
<div class="t" style="left:697.30px;top:383.00px;font-size:6.00px;color:#fff;font-style:italic;--w:30.90px;transform:scaleX(0.8993);transform-origin:0 0;">(Base Layer)</div>
<svg class="a" style="left:733.3px;top:384px;" width="6" height="4" viewBox="0 0 6 4"><path d="M0 2 Q3 -1 6 2 Q3 5 0 2Z" fill="#fff"/><circle cx="3" cy="2" r="0.9" fill="#1f74c9"/></svg>
<div class="a" style="left:581.00px;top:395.00px;width:166.00px;height:22.00px;background:#f7f8fa"></div>
<div class="a" style="left:591.00px;top:399.00px;width:13.50px;height:14.00px;background:#fff;border:1px solid #d5d9de"></div>
<svg class="a" style="left:594px;top:401px;" width="8" height="9" viewBox="0 0 8 9"><path d="M0.5 0.5 L5 0.5 L7.5 3 L7.5 8.5 L0.5 8.5Z" stroke="#555" stroke-width="0.8" fill="#fff"/></svg>
<div class="a" style="left:606.00px;top:399.00px;width:13.00px;height:14.00px;background:#fff;border:1px solid #d5d9de"></div>
<svg class="a" style="left:608px;top:401px;" width="9" height="9" viewBox="0 0 9 9"><rect x="1" y="1" width="6" height="7" stroke="#777" stroke-width="0.8" fill="#eee"/><path d="M2 5 L4 7 L8 2" stroke="#3b9a3b" stroke-width="1.2" fill="none"/></svg>
<svg class="a" style="left:622px;top:401px;" width="8" height="9" viewBox="0 0 8 9"><path d="M0.5 1.5 L7.5 1.5 M1.5 1.5 L2 8.5 L6 8.5 L6.5 1.5 M3 0.5 L5 0.5" stroke="#aaa" stroke-width="0.8" fill="none"/></svg>
<svg class="a" style="left:638.2px;top:404px;" width="6.5" height="4.5" viewBox="0 0 6.5 4.5"><path d="M0.5 2 L2.3 4 L6 0.3" stroke="#2a6cc4" stroke-width="1.1" fill="none"/></svg>
<div class="t" style="left:648.90px;top:404.00px;font-size:6.60px;color:#444;--w:10.70px;transform:scaleX(0.9119);transform-origin:0 0;">Dim</div>
<div class="a" style="left:729.30px;top:398.90px;width:12.90px;height:12.70px;background:#fff;border:1px solid #d0d4d9"></div>
<svg class="a" style="left:732.5px;top:402px;" width="7" height="7" viewBox="0 0 7 7"><circle cx="3.5" cy="3.5" r="2" stroke="#555" stroke-width="1.3" fill="none"/><path d="M3.5 0 L3.5 1.2 M3.5 5.8 L3.5 7 M0 3.5 L1.2 3.5 M5.8 3.5 L7 3.5 M1 1 L1.8 1.8 M5.2 5.2 L6 6 M6 1 L5.2 1.8 M1.8 5.2 L1 6" stroke="#555" stroke-width="1"/></svg>
<div class="t" style="left:612.90px;top:393.00px;font-size:9.50px;color:rgba(120,120,120,0.62);--w:72.70px;transform:scaleX(0.9695);transform-origin:0 0;-webkit-text-stroke:0;">Activate Windows</div>
<div class="t" style="left:612.90px;top:406.00px;font-size:6.50px;color:rgba(120,120,120,0.62);--w:103.80px;transform:scaleX(1.0116);transform-origin:0 0;-webkit-text-stroke:0;">Go to Settings to activate Windows.</div>
<div class="a" style="left:51.00px;top:31.00px;width:1.00px;height:386.00px;background:#fbfcfd"></div>
<div class="a" style="left:746.00px;top:31.00px;width:1.00px;height:386.00px;background:#fbfcfd"></div>
<div class="a" style="left:51.00px;top:417.00px;width:696.00px;height:14.60px;background:#2f2d31"></div>
<div class="t" style="left:56.00px;top:422.00px;font-size:5.80px;color:#a9a9a9;--w:26.00px;transform:scaleX(0.8961);transform-origin:0 0;">Slide 1 of 1</div>
<div class="t" style="left:89.60px;top:422.00px;font-size:5.80px;color:#a9a9a9;--w:24.00px;transform:scaleX(0.9247);transform-origin:0 0;">720 &times; 540</div>
<div class="t" style="left:121.00px;top:422.00px;font-size:5.80px;color:#a9a9a9;--w:17.00px;transform:scaleX(0.8824);transform-origin:0 0;">"Clean"</div>
<div class="t" style="left:145.60px;top:422.00px;font-size:5.80px;color:#a9a9a9;--w:31.80px;transform:scaleX(0.8891);transform-origin:0 0;">Feature Flags</div>
<svg class="a" style="left:626px;top:419px;" width="122" height="9" viewBox="0 0 122 9">
<rect x="1.3" y="1" width="2.5" height="2.5" fill="#aaa"/><rect x="4.8" y="1" width="2.5" height="2.5" fill="#aaa"/>
<rect x="1.3" y="4.5" width="2.5" height="2.5" fill="#aaa"/><rect x="4.8" y="4.5" width="2.5" height="2.5" fill="#aaa"/>
<rect x="11" y="0" width="9" height="9" fill="#444"/>
<rect x="13.2" y="1.5" width="5.5" height="5.5" stroke="#aaa" stroke-width="0.8" fill="none"/>
<path d="M25 1 L30 1 L28.2 3.5 L28.2 6.5 L26.8 6.5 L26.8 3.5Z" fill="none" stroke="#aaa" stroke-width="0.8"/>
<line x1="25" y1="7.5" x2="30" y2="7.5" stroke="#aaa" stroke-width="0.6"/>
<line x1="50" y1="4.5" x2="52.5" y2="4.5" stroke="#aaa" stroke-width="0.9"/>
<line x1="55" y1="4.5" x2="102" y2="4.5" stroke="#999" stroke-width="1"/>
<circle cx="71.2" cy="4.5" r="1.8" stroke="#ccc" stroke-width="0.9" fill="#2f2d31"/>
<line x1="79" y1="2.5" x2="79" y2="6.5" stroke="#ccc" stroke-width="1"/>
<path d="M104.5 4.5 L107.7 4.5 M106.1 2.9 L106.1 6.1" stroke="#ccc" stroke-width="0.9"/>
<rect x="111.5" y="1" width="7" height="7" stroke="#aaa" stroke-width="0.8" fill="none"/>
<path d="M112.5 2 L117.5 7 M117.5 2 L112.5 7" stroke="#aaa" stroke-width="0.6"/>
</svg>
<div class="t" style="left:660.60px;top:422.00px;font-size:5.50px;color:#666;--w:9.80px;transform:scaleX(0.8896);transform-origin:0 0;">70%</div>
<div class="a" style="left:51.00px;top:431.60px;width:696.00px;height:18.40px;background:#1e1b1d"></div>
<div class="a" style="left:121.00px;top:431.60px;width:74.00px;height:18.40px;background:#2c292b"></div>
<svg class="a" style="left:58px;top:436.4px;" width="9" height="10" viewBox="0 0 9 10"><path d="M0 1.3 L3.8 0.7 L3.8 4.6 L0 4.6Z M4.5 0.6 L9 0 L9 4.6 L4.5 4.6Z M0 5.3 L3.8 5.3 L3.8 9.2 L0 8.7Z M4.5 5.3 L9 5.3 L9 9.8 L4.5 9.3Z" fill="#fff"/></svg>
<svg class="a" style="left:81px;top:436px;" width="11" height="11" viewBox="0 0 11 11"><circle cx="5.5" cy="5.5" r="5.3" fill="#e34133"/><path d="M5.5 5.5 L10.3 3 A5.3 5.3 0 0 1 8.1 10.1Z" fill="#f6c026"/><path d="M5.5 5.5 L8.1 10.1 A5.3 5.3 0 0 1 0.7 3.2Z" fill="#2aa24a"/><circle cx="5.5" cy="5.5" r="2.5" fill="#fff"/><circle cx="5.5" cy="5.5" r="1.9" fill="#3d7be0"/></svg>
<svg class="a" style="left:103.6px;top:437px;" width="11" height="9" viewBox="0 0 11 9"><rect x="0" y="1" width="11" height="8" fill="#e9b43f"/><rect x="0" y="0" width="4.5" height="2" fill="#d99a26"/><rect x="1" y="3.2" width="9" height="3.5" fill="#5aa7d6"/><rect x="0" y="6.5" width="11" height="2.5" fill="#f4c95a"/></svg>
<div class="a" style="left:125.60px;top:436.00px;width:10.40px;height:10.50px;border-radius:50%;background:#a8479f"></div>
<div class="t" style="left:128.30px;top:438.00px;font-size:6.00px;color:#fff;font-weight:bold;--w:5.00px;transform:scaleX(0.9969);transform-origin:0 0;">sl</div>
<div class="t" style="left:137.60px;top:439.00px;font-size:6.10px;color:#fff;--w:51.80px;transform:scaleX(0.8996);transform-origin:0 0;">Articulate Storyline ...</div>
<svg class="a" style="left:648px;top:436px;" width="45" height="11" viewBox="0 0 45 11">
<path d="M0.5 6.5 L3.5 3.5 L6.5 6.5" stroke="#fff" stroke-width="0.9" fill="none"/>
<rect x="11.5" y="2.5" width="7" height="5" fill="#ddd"/><rect x="12.5" y="1.5" width="2" height="1" fill="#ddd"/>
<rect x="22" y="1" width="8" height="6" stroke="#ddd" stroke-width="0.9" fill="none"/><rect x="21.5" y="3" width="3" height="6.5" fill="#ddd"/>
<path d="M33.5 3.5 L35.5 3.5 L38 1 L38 9 L35.5 6.5 L33.5 6.5Z" stroke="#ddd" stroke-width="0.8" fill="none"/>
<path d="M39.5 3 Q40.5 5 39.5 7 M41 2 Q42.5 5 41 8" stroke="#ddd" stroke-width="0.8" fill="none"/>
</svg>
<div class="t" style="left:694.70px;top:435.00px;font-size:6.20px;color:#fff;--w:23.60px;transform:scaleX(0.9023);transform-origin:0 0;">03:35 AM</div>
<div class="t" style="left:694.00px;top:443.00px;font-size:6.20px;color:#fff;--w:25.40px;transform:scaleX(0.8893);transform-origin:0 0;">07-Feb-23</div>
<svg class="a" style="left:728px;top:436.5px;" width="13" height="11" viewBox="0 0 13 11"><path d="M0.5 0.5 L10 0.5 L10 7.5 L0.5 7.5Z" fill="#ddd"/><circle cx="9.5" cy="8" r="3" fill="#1e1b1d" stroke="#ddd" stroke-width="0.8"/><path d="M9.5 6.5 L9.5 9.5" stroke="#ddd" stroke-width="0.8"/></svg>
<div class="a" style="left:483.6px;top:13.7px;width:186.5px;height:307.2px;border-radius:6px;overflow:hidden;background:#fafafa;box-shadow:0 1px 4px rgba(0,0,0,0.22)">
</div>
<div class="a" style="left:483.60px;top:13.70px;width:186.50px;height:80.30px;background:#e5e5e5;border-radius:6px 6px 0 0"></div>
<div class="a" style="left:483.60px;top:31.00px;width:186.50px;height:0.80px;background:#d6d6d6"></div>
<div class="t" style="left:490.40px;top:20.00px;font-size:6.60px;color:#5c5c5c;--w:27.70px;transform:scaleX(0.9562);transform-origin:0 0;-webkit-text-stroke:0.2px #5c5c5c;">CloudApp</div>
<svg class="a" style="left:617px;top:17.5px;" width="48" height="10" viewBox="0 0 48 10">
<circle cx="5" cy="5" r="3.6" stroke="#4d94e6" stroke-width="1.3" fill="#fff"/>
<path d="M5 3 L5 5.2 L6.2 6" stroke="#4d94e6" stroke-width="0.8" fill="none"/>
<path d="M14 8 L20 8 L19 6.5 L19 4 Q19 1.5 17 1.5 Q15 1.5 15 4 L15 6.5Z" fill="#222"/>
<circle cx="17" cy="9" r="0.9" fill="#222"/>
<circle cx="20.5" cy="2" r="1.4" fill="#e0433a"/>
<circle cx="30" cy="5" r="3.8" fill="#333"/>
<path d="M28 2.5 Q29.5 3.5 29 5 Q28 6 28.5 7.5 M31 2 Q32.5 4 31.5 5.5 Q30.8 7 32.5 8" stroke="#ddd" stroke-width="0.9" fill="none"/>
<circle cx="42.6" cy="5" r="2.3" stroke="#222" stroke-width="1.7" fill="none"/>
<path d="M42.6 1 L42.6 2 M42.6 8 L42.6 9 M38.6 5 L39.6 5 M45.6 5 L46.6 5 M39.8 2.2 L40.5 2.9 M44.7 7.1 L45.4 7.8 M45.4 2.2 L44.7 2.9 M40.5 7.1 L39.8 7.8" stroke="#222" stroke-width="1.5"/>
</svg>
<svg class="a" style="left:496.25px;top:42.25px;" width="17" height="17" viewBox="0 0 17 17"><path d="M0.5 2.2 L0.5 0.5 L2.2 0.5 M13.3 0.5 L15.5 0.5 L15.5 2.2 M15.5 13.0 L15.5 15.2 L13.3 15.2 M2.2 15.2 L0.5 15.2 L0.5 13.0" stroke="#c4c4c4" stroke-width="0.9" fill="none"/></svg>
<svg class="a" style="left:500.5px;top:46.5px;" width="7" height="7" viewBox="0 0 7 7"><circle cx="3.5" cy="3.5" r="2.9" stroke="#b8b8b8" stroke-width="0.8" fill="none"/><circle cx="3.5" cy="3.5" r="1.4" fill="#b0b0b0"/></svg>
<div class="t" style="left:495.00px;top:63.00px;font-size:6.30px;color:#8c8c8c;font-weight:bold;--w:18.75px;transform:scaleX(0.8639);transform-origin:0 0;">Record</div>
<svg class="a" style="left:533px;top:42.25px;" width="17" height="17" viewBox="0 0 17 17"><path d="M0.5 2.2 L0.5 0.5 L2.2 0.5 M13.3 0.5 L15.5 0.5 L15.5 2.2 M15.5 13.0 L15.5 15.2 L13.3 15.2 M2.2 15.2 L0.5 15.2 L0.5 13.0" stroke="#8a8a8a" stroke-width="0.9" fill="none"/></svg>
<svg class="a" style="left:537px;top:47px;" width="8" height="6" viewBox="0 0 8 6"><path d="M0 1.2 L2 1.2 L2.8 0 L5.2 0 L6 1.2 L8 1.2 L8 6 L0 6Z" fill="#222"/><circle cx="4" cy="3.5" r="1.5" fill="#e5e5e5"/><circle cx="4" cy="3.5" r="0.8" fill="#222"/></svg>
<div class="t" style="left:529.75px;top:63.00px;font-size:6.30px;color:#222;font-weight:bold;--w:21.75px;transform:scaleX(0.9140);transform-origin:0 0;">Capture</div>
<svg class="a" style="left:569px;top:42.25px;" width="17" height="17" viewBox="0 0 17 17"><path d="M0.5 2.2 L0.5 0.5 L2.2 0.5 M13.3 0.5 L15.5 0.5 L15.5 2.2 M15.5 13.0 L15.5 15.2 L13.3 15.2 M2.2 15.2 L0.5 15.2 L0.5 13.0" stroke="#c4c4c4" stroke-width="0.9" fill="none"/></svg>
<div class="t" style="left:571.50px;top:47.00px;font-size:6.80px;color:#a0a0a0;font-weight:bold;--w:10.40px;transform:scaleX(0.9181);transform-origin:0 0;">GIF</div>
<div class="t" style="left:572.25px;top:63.00px;font-size:6.30px;color:#8c8c8c;font-weight:bold;--w:9.00px;transform:scaleX(0.8571);transform-origin:0 0;">GIF</div>
<svg class="a" style="left:605.3px;top:42.25px;" width="17" height="17" viewBox="0 0 17 17"><path d="M0.5 2.2 L0.5 0.5 L2.2 0.5 M13.3 0.5 L15.5 0.5 L15.5 2.2 M15.5 13.0 L15.5 15.2 L13.3 15.2 M2.2 15.2 L0.5 15.2 L0.5 13.0" stroke="#8a8a8a" stroke-width="0.9" fill="none"/></svg>
<svg class="a" style="left:608px;top:44.5px;" width="11" height="12" viewBox="0 0 11 12"><path d="M8.5 0.8 L10 2.3 L4 8.3 L2.2 8.6 L2.5 6.8Z" fill="#444"/><path d="M3 9.5 Q0 10 1.5 11 Q5 11.8 8 10.5" stroke="#888" stroke-width="0.9" fill="none"/></svg>
<div class="t" style="left:601.00px;top:63.00px;font-size:6.30px;color:#222;font-weight:bold;--w:24.50px;transform:scaleX(0.8975);transform-origin:0 0;">Annotate</div>
<svg class="a" style="left:641.6px;top:42.25px;" width="17" height="17" viewBox="0 0 17 17"><path d="M0.5 2.2 L0.5 0.5 L2.2 0.5 M13.3 0.5 L15.5 0.5 L15.5 2.2 M15.5 13.0 L15.5 15.2 L13.3 15.2 M2.2 15.2 L0.5 15.2 L0.5 13.0" stroke="#8a8a8a" stroke-width="0.9" fill="none"/></svg>
<svg class="a" style="left:645.5px;top:47.3px;" width="8" height="5" viewBox="0 0 8 5"><path d="M0 2.5 L6.5 2.5 M4.2 0.3 L6.7 2.5 L4.2 4.7" stroke="#222" stroke-width="1.3" fill="none"/></svg>
<div class="t" style="left:642.80px;top:63.00px;font-size:6.30px;color:#222;font-weight:bold;--w:13.20px;transform:scaleX(0.8773);transform-origin:0 0;">More</div>
<div class="a" style="left:490.00px;top:79.50px;width:176.00px;height:10.00px;background:#d5d5d5;border-radius:3px"></div>
<div class="a" style="left:491.00px;top:80.20px;width:58.00px;height:8.60px;background:#fdfdfd;border-radius:2.5px;box-shadow:0 0.5px 1px rgba(0,0,0,0.15)"></div>
<div class="t" style="left:513.00px;top:81.00px;font-size:7.00px;color:#333;--w:13.25px;transform:scaleX(0.8964);transform-origin:0 0;">Files</div>
<div class="t" style="left:562.50px;top:81.00px;font-size:7.00px;color:#333;--w:31.25px;transform:scaleX(0.9124);transform-origin:0 0;">Collections</div>
<div class="t" style="left:623.75px;top:81.00px;font-size:7.00px;color:#333;--w:25.50px;transform:scaleX(0.8855);transform-origin:0 0;">Favorites</div>
<div class="a" style="left:483.60px;top:93.50px;width:186.50px;height:0.70px;background:#d8d8d8"></div>
<div class="a" style="left:483.60px;top:94.30px;width:186.50px;height:43.80px;background:#e4e4e4;"></div>
<div class="a" style="left:483.60px;top:135.30px;width:186.50px;height:0.80px;background:#d9d9d9"></div>
<div class="t" style="left:528.60px;top:100.00px;font-size:6.20px;color:#2a2a2a;--w:105.70px;transform:scaleX(0.9572);transform-origin:0 0;">Windows 10 2023-02-07 at 12.19.54 AM</div>
<div class="t" style="left:528.60px;top:109.00px;font-size:6.20px;color:#adadad;--w:31.20px;transform:scaleX(0.8982);transform-origin:0 0;">JPEG image</div>
<div class="t" style="left:641.90px;top:109.00px;font-size:6.20px;color:#adadad;--w:20.90px;transform:scaleX(1.0126);transform-origin:0 0;">0 views</div>
<svg class="a" style="left:655px;top:102.6px;" width="9" height="2" viewBox="0 0 9 2"><circle cx="1" cy="1" r="0.95" fill="#333"/><circle cx="4.3" cy="1" r="0.95" fill="#333"/><circle cx="7.6" cy="1" r="0.95" fill="#333"/></svg>
<svg class="a" style="left:641px;top:122.3px;" width="8" height="8" viewBox="0 0 8 8"><rect x="0" y="1.8" width="7.6" height="5.8" rx="0.6" fill="#555"/><path d="M2.5 1.8 L2.5 0.6 L5.1 0.6 L5.1 1.8" stroke="#555" stroke-width="0.8" fill="none"/><rect x="3.2" y="4" width="1.2" height="1.2" fill="#eee"/></svg>
<svg class="a" style="left:655px;top:122.9px;" width="8.2" height="8" viewBox="0 0 8.2 8"><path d="M4.1 0.6 L5.1 2.9 L7.6 3.1 L5.7 4.7 L6.3 7.3 L4.1 5.9 L1.9 7.3 L2.5 4.7 L0.6 3.1 L3.1 2.9Z" stroke="#555" stroke-width="0.7" fill="none"/></svg>
<div class="a" style="left:483.60px;top:138.10px;width:186.50px;height:43.80px;background:#fafafa;"></div>
<div class="a" style="left:483.60px;top:179.10px;width:186.50px;height:0.80px;background:#d9d9d9"></div>
<div class="t" style="left:528.60px;top:144.00px;font-size:6.20px;color:#2a2a2a;--w:119.30px;transform:scaleX(0.9145);transform-origin:0 0;">OR_Eric Santos_1610 - esantos1027@gmail....</div>
<div class="t" style="left:528.60px;top:153.00px;font-size:6.20px;color:#adadad;--w:31.20px;transform:scaleX(0.8982);transform-origin:0 0;">JPEG image</div>
<div class="t" style="left:641.90px;top:153.00px;font-size:6.20px;color:#adadad;--w:20.90px;transform:scaleX(1.0126);transform-origin:0 0;">0 views</div>
<svg class="a" style="left:655px;top:146.4px;" width="9" height="2" viewBox="0 0 9 2"><circle cx="1" cy="1" r="0.95" fill="#333"/><circle cx="4.3" cy="1" r="0.95" fill="#333"/><circle cx="7.6" cy="1" r="0.95" fill="#333"/></svg>
<svg class="a" style="left:641px;top:166.1px;" width="8" height="8" viewBox="0 0 8 8"><rect x="0" y="1.8" width="7.6" height="5.8" rx="0.6" fill="#555"/><path d="M2.5 1.8 L2.5 0.6 L5.1 0.6 L5.1 1.8" stroke="#555" stroke-width="0.8" fill="none"/><rect x="3.2" y="4" width="1.2" height="1.2" fill="#eee"/></svg>
<svg class="a" style="left:655px;top:166.7px;" width="8.2" height="8" viewBox="0 0 8.2 8"><path d="M4.1 0.6 L5.1 2.9 L7.6 3.1 L5.7 4.7 L6.3 7.3 L4.1 5.9 L1.9 7.3 L2.5 4.7 L0.6 3.1 L3.1 2.9Z" stroke="#555" stroke-width="0.7" fill="none"/></svg>
<div class="a" style="left:483.60px;top:181.90px;width:186.50px;height:43.80px;background:#fafafa;"></div>
<div class="a" style="left:483.60px;top:222.90px;width:186.50px;height:0.80px;background:#d9d9d9"></div>
<div class="t" style="left:528.60px;top:188.00px;font-size:6.20px;color:#2a2a2a;--w:105.70px;transform:scaleX(0.9543);transform-origin:0 0;">Windows 10 2023-02-06 at 10.33.05 PM</div>
<div class="t" style="left:528.60px;top:197.00px;font-size:6.20px;color:#adadad;--w:31.20px;transform:scaleX(0.8982);transform-origin:0 0;">JPEG image</div>
<div class="t" style="left:641.90px;top:197.00px;font-size:6.20px;color:#adadad;--w:20.90px;transform:scaleX(1.0126);transform-origin:0 0;">0 views</div>
<svg class="a" style="left:655px;top:190.2px;" width="9" height="2" viewBox="0 0 9 2"><circle cx="1" cy="1" r="0.95" fill="#333"/><circle cx="4.3" cy="1" r="0.95" fill="#333"/><circle cx="7.6" cy="1" r="0.95" fill="#333"/></svg>
<svg class="a" style="left:641px;top:209.89999999999998px;" width="8" height="8" viewBox="0 0 8 8"><rect x="0" y="1.8" width="7.6" height="5.8" rx="0.6" fill="#555"/><path d="M2.5 1.8 L2.5 0.6 L5.1 0.6 L5.1 1.8" stroke="#555" stroke-width="0.8" fill="none"/><rect x="3.2" y="4" width="1.2" height="1.2" fill="#eee"/></svg>
<svg class="a" style="left:655px;top:210.49999999999997px;" width="8.2" height="8" viewBox="0 0 8.2 8"><path d="M4.1 0.6 L5.1 2.9 L7.6 3.1 L5.7 4.7 L6.3 7.3 L4.1 5.9 L1.9 7.3 L2.5 4.7 L0.6 3.1 L3.1 2.9Z" stroke="#555" stroke-width="0.7" fill="none"/></svg>
<div class="a" style="left:483.60px;top:225.70px;width:186.50px;height:43.80px;background:#fafafa;"></div>
<div class="a" style="left:483.60px;top:266.70px;width:186.50px;height:0.80px;background:#d9d9d9"></div>
<div class="t" style="left:528.60px;top:232.00px;font-size:6.20px;color:#2a2a2a;--w:119.30px;transform:scaleX(0.9250);transform-origin:0 0;">Currency Converter Foreign Exchange Rates...</div>
<div class="t" style="left:528.60px;top:241.00px;font-size:6.20px;color:#adadad;--w:31.20px;transform:scaleX(0.8982);transform-origin:0 0;">JPEG image</div>
<div class="t" style="left:641.90px;top:241.00px;font-size:6.20px;color:#adadad;--w:20.90px;transform:scaleX(1.0126);transform-origin:0 0;">0 views</div>
<svg class="a" style="left:655px;top:234.0px;" width="9" height="2" viewBox="0 0 9 2"><circle cx="1" cy="1" r="0.95" fill="#333"/><circle cx="4.3" cy="1" r="0.95" fill="#333"/><circle cx="7.6" cy="1" r="0.95" fill="#333"/></svg>
<svg class="a" style="left:641px;top:253.7px;" width="8" height="8" viewBox="0 0 8 8"><rect x="0" y="1.8" width="7.6" height="5.8" rx="0.6" fill="#555"/><path d="M2.5 1.8 L2.5 0.6 L5.1 0.6 L5.1 1.8" stroke="#555" stroke-width="0.8" fill="none"/><rect x="3.2" y="4" width="1.2" height="1.2" fill="#eee"/></svg>
<svg class="a" style="left:655px;top:254.29999999999998px;" width="8.2" height="8" viewBox="0 0 8.2 8"><path d="M4.1 0.6 L5.1 2.9 L7.6 3.1 L5.7 4.7 L6.3 7.3 L4.1 5.9 L1.9 7.3 L2.5 4.7 L0.6 3.1 L3.1 2.9Z" stroke="#555" stroke-width="0.7" fill="none"/></svg>
<div class="a" style="left:483.60px;top:269.50px;width:186.50px;height:43.80px;background:#fafafa;"></div>
<div class="a" style="left:483.60px;top:310.50px;width:186.50px;height:0.80px;background:#d9d9d9"></div>
<div class="t" style="left:528.60px;top:275.00px;font-size:6.20px;color:#2a2a2a;--w:102.50px;transform:scaleX(0.9581);transform-origin:0 0;">Windows 10 2023-02-03 at 3.52.48 AM</div>
<div class="t" style="left:528.60px;top:285.00px;font-size:6.20px;color:#adadad;--w:31.20px;transform:scaleX(0.8982);transform-origin:0 0;">JPEG image</div>
<div class="t" style="left:641.90px;top:285.00px;font-size:6.20px;color:#adadad;--w:20.90px;transform:scaleX(1.0126);transform-origin:0 0;">0 views</div>
<svg class="a" style="left:655px;top:277.8px;" width="9" height="2" viewBox="0 0 9 2"><circle cx="1" cy="1" r="0.95" fill="#333"/><circle cx="4.3" cy="1" r="0.95" fill="#333"/><circle cx="7.6" cy="1" r="0.95" fill="#333"/></svg>
<svg class="a" style="left:641px;top:297.5px;" width="8" height="8" viewBox="0 0 8 8"><rect x="0" y="1.8" width="7.6" height="5.8" rx="0.6" fill="#555"/><path d="M2.5 1.8 L2.5 0.6 L5.1 0.6 L5.1 1.8" stroke="#555" stroke-width="0.8" fill="none"/><rect x="3.2" y="4" width="1.2" height="1.2" fill="#eee"/></svg>
<svg class="a" style="left:655px;top:298.1px;" width="8.2" height="8" viewBox="0 0 8.2 8"><path d="M4.1 0.6 L5.1 2.9 L7.6 3.1 L5.7 4.7 L6.3 7.3 L4.1 5.9 L1.9 7.3 L2.5 4.7 L0.6 3.1 L3.1 2.9Z" stroke="#555" stroke-width="0.7" fill="none"/></svg>
<div class="a" style="left:483.60px;top:313.30px;width:186.50px;height:7.60px;background:#fafafa;border-radius:0 0 6px 6px"></div>
<div class="a" style="left:0;top:0;width:800px;height:320.9px;overflow:hidden">
<div class="t" style="left:528.60px;top:319.00px;font-size:6.20px;color:#2a2a2a;--w:105.00px;transform:scaleX(0.9250);transform-origin:0 0;">Screenshot 2023-02-02 at 4.40.41.00 PM</div>
</div>
<svg class="a" style="left:491px;top:100.1px;" width="30" height="30" viewBox="0 0 30 30"><rect x="0" y="0" width="30" height="30" fill="#fff" stroke="#d8d8d8" stroke-width="0.6"/><rect x="0" y="0" width="30" height="3" fill="#dfe9f2"/><rect x="0.5" y="3.5" width="3" height="22" fill="#e8ecef"/><rect x="3.5" y="4" width="5.8" height="22" fill="#a2a2a2"/><rect x="9.3" y="5" width="1.2" height="14" fill="#c23a2c"/><rect x="11" y="6.5" width="19" height="0.8" fill="#7a9cc6"/><rect x="11" y="24.5" width="19" height="1.2" fill="#5b88c2"/><rect x="0.5" y="26" width="9" height="3" fill="#cfe3c6"/></svg>
<svg class="a" style="left:491px;top:143.9px;" width="30" height="30" viewBox="0 0 30 30"><rect x="0" y="0" width="30" height="30" fill="#fff" stroke="#d8d8d8" stroke-width="0.6"/><rect x="2" y="2" width="26" height="26" fill="#f7f7f7"/><rect x="16" y="3" width="12" height="2.2" fill="#666"/><rect x="2" y="3" width="5" height="1" fill="#888"/><rect x="3" y="7" width="5" height="18" fill="#ececec"/><rect x="10" y="8" width="17" height="0.8" fill="#999"/><rect x="10" y="11" width="12" height="0.6" fill="#bbb"/><rect x="10" y="13.5" width="17" height="0.6" fill="#bbb"/><rect x="10" y="16" width="14" height="0.6" fill="#bbb"/><rect x="10" y="18.5" width="17" height="0.6" fill="#bbb"/><rect x="10" y="21" width="10" height="0.6" fill="#bbb"/><rect x="3" y="24" width="6" height="1.6" fill="#555"/><rect x="11" y="24" width="16" height="0.8" fill="#aaa"/></svg>
<svg class="a" style="left:491px;top:187.7px;" width="30" height="30" viewBox="0 0 30 30"><rect x="0" y="0" width="30" height="30" fill="#fff" stroke="#d8d8d8" stroke-width="0.6"/><rect x="0" y="0" width="4" height="30" fill="#9a9a9a"/><rect x="4" y="0" width="26" height="17" fill="#3a3f48"/><path d="M8 4 L14 3 L18 12 L12 16Z" fill="#bfc4c9"/><path d="M19 6 L26 5 L28 15 L20 16Z" fill="#6d7682"/><rect x="4" y="17" width="26" height="13" fill="#fff"/><rect x="6" y="19" width="8" height="0.8" fill="#777"/><rect x="18" y="19" width="8" height="0.8" fill="#777"/><rect x="6" y="23" width="9" height="0.6" fill="#aaa"/><rect x="18" y="23" width="9" height="0.6" fill="#aaa"/></svg>
<svg class="a" style="left:491px;top:230.9px;" width="30" height="30" viewBox="0 0 30 30"><rect x="0" y="0" width="30" height="30" fill="#fff" stroke="#d8d8d8" stroke-width="0.6"/><rect x="0.5" y="9" width="12" height="8" fill="#e4e4e4"/><rect x="0.5" y="1" width="12" height="6" fill="#fafafa" stroke="#e0e0e0" stroke-width="0.4"/><rect x="17" y="2" width="4" height="3" fill="#c62d3a"/><rect x="17" y="4" width="4" height="1.3" fill="#2e4a9a"/><rect x="22" y="3" width="6" height="1" fill="#555"/><rect x="16" y="10" width="13" height="5" fill="#eee" stroke="#999" stroke-width="0.4"/><rect x="4" y="21" width="3" height="2" fill="#444"/><rect x="20" y="21" width="8" height="0.8" fill="#aaa"/></svg>
<svg class="a" style="left:491px;top:275.3px;" width="30" height="30" viewBox="0 0 30 30"><rect x="0" y="0" width="30" height="30" fill="#fff" stroke="#d8d8d8" stroke-width="0.6"/><rect x="0" y="5" width="30" height="25" fill="#111"/><rect x="9" y="7" width="20.5" height="20" fill="#fff"/><rect x="1" y="28" width="5" height="0.8" fill="#3a3"/></svg>
<svg class="a" style="left:491px;top:318.7px;overflow:hidden" width="30" height="2" viewBox="0 0 30 2"><rect x="0.3" y="0.3" width="29.4" height="2.7" fill="#fff" stroke="#d8d8d8" stroke-width="0.6"/></svg>
</body></html>
